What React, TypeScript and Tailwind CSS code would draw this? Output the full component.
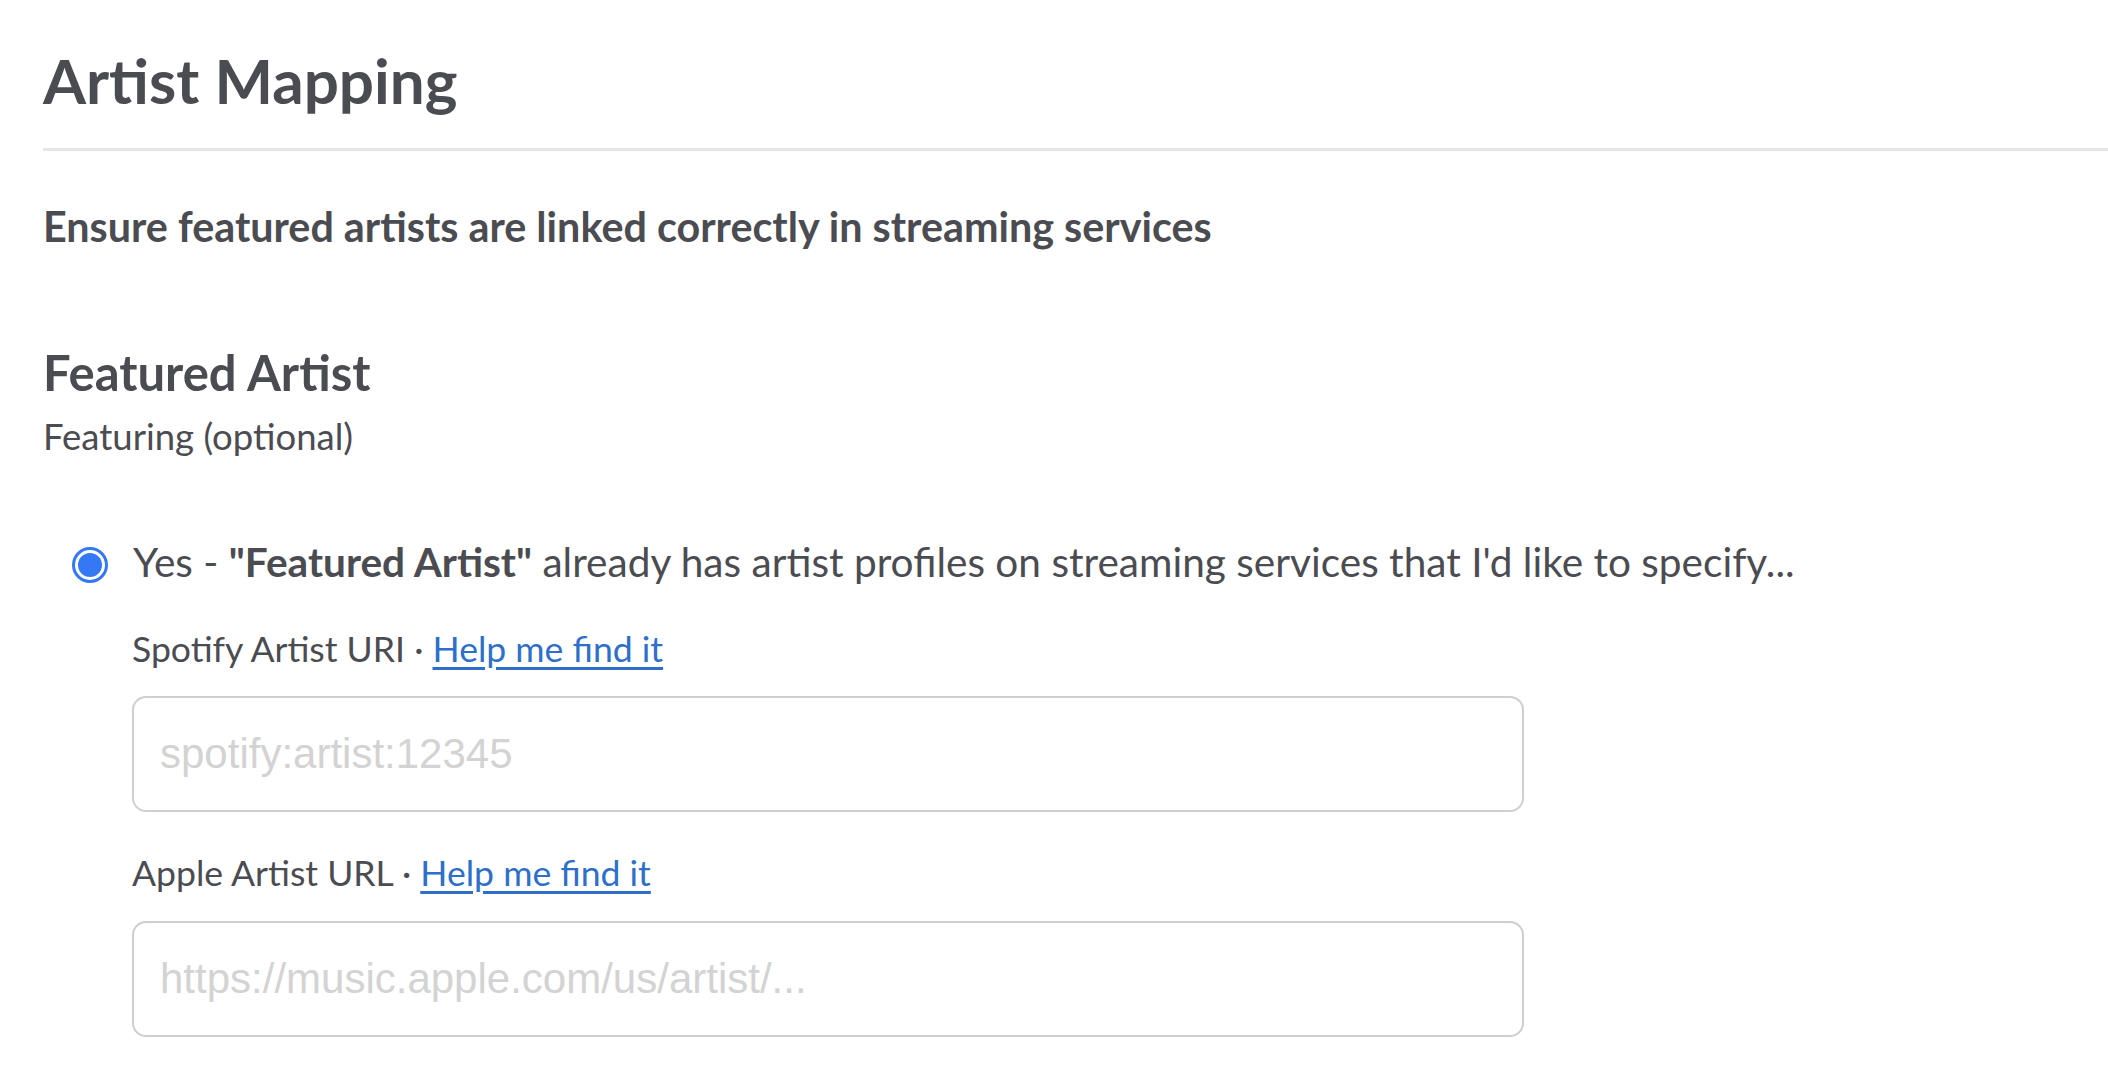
export default function App() {
  return (
    <div className="min-h-screen bg-white pl-[43px] font-['Lato','Noto_Sans',sans-serif] text-[#4b4c52]">
      <h1 className="pt-[40px] text-[62px] font-bold leading-[80px]">Artist Mapping</h1>
      <div className="mt-[28px] h-[3px] bg-[#e5e6ea]" />

      <p className="mt-[50px] text-[41.3px] font-bold leading-[50px]">
        Ensure featured artists are linked correctly in streaming services
      </p>

      <h2 className="mt-[91px] text-[49px] font-bold leading-[60px]">Featured Artist</h2>
      <p className="mt-[12px] text-[36.5px] leading-[44px]">Featuring (optional)</p>

      <div className="mt-[79px] flex items-center gap-[25px] pl-[29px]">
        <span className="mt-[5px] flex h-[36px] w-[36px] shrink-0 items-center justify-center rounded-full border-[3px] border-[#3478f6] bg-white">
          <span className="h-[24px] w-[24px] rounded-full bg-[#3478f6]" />
        </span>
        <span className="text-[40.6px] leading-[50px]">
          Yes - <span className="font-bold">"Featured Artist"</span> already has artist profiles on streaming services that I'd like to specify...
        </span>
      </div>

      <div className="w-[1481px] pl-[89px]">
        <label className="mt-[40px] block text-[35.6px] leading-[44px]">
          Spotify Artist URI · <a href="#" className="text-[#2e6fc9] underline underline-offset-[5px]">Help me find it</a>
        </label>
        <input
          placeholder="spotify:artist:12345"
          className="mt-[25px] h-[116px] w-[1392px] rounded-[14px] border-2 border-[#cfcfcf] px-[26px] font-['Liberation_Sans',Arial,sans-serif] text-[42px] outline-none placeholder:text-[#d3d3d3]"
        />

        <label className="mt-[39px] block text-[35.6px] leading-[44px]">
          Apple Artist URL · <a href="#" className="text-[#2e6fc9] underline underline-offset-[5px]">Help me find it</a>
        </label>
        <input
          placeholder="https://music.apple.com/us/artist/..."
          className="mt-[26px] h-[116px] w-[1392px] rounded-[14px] border-2 border-[#cfcfcf] px-[26px] font-['Liberation_Sans',Arial,sans-serif] text-[42px] outline-none placeholder:text-[#d3d3d3]"
        />
      </div>
    </div>
  )
}
